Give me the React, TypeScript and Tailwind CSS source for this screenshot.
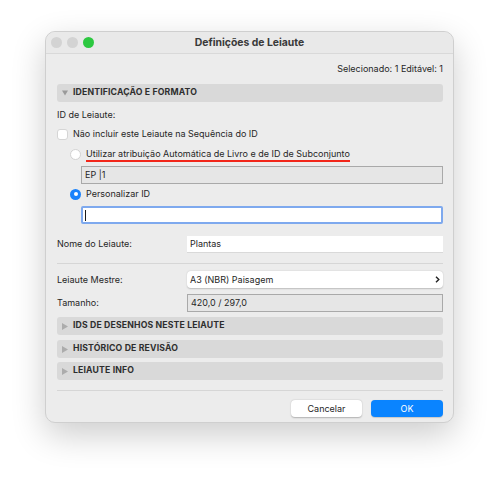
import React from 'react';

const font = { fontFamily: 'Inter, "Liberation Sans", sans-serif' };

const SectionBar: React.FC<{ title: string; open?: boolean; className?: string }> = ({ title, open, className }) => (
  <div className={`flex items-center h-[18px] rounded-[3px] bg-[#d9d9d9] pl-[5px] ${className || ''}`}>
    <span className="w-[6px] flex items-center justify-center">
      {open ? (
        <svg width="7" height="6" viewBox="0 0 7 6"><path d="M0 0h7L3.5 6z" fill="#9a9a9a" /></svg>
      ) : (
        <svg width="6" height="7" viewBox="0 0 6 7"><path d="M0 0v7l6-3.5z" fill="#acacac" /></svg>
      )}
    </span>
    <span className="ml-[5px] text-[8.7px] font-bold text-[#2e2e2e] tracking-[0.15px]">{title}</span>
  </div>
);

const Radio: React.FC<{ checked?: boolean }> = ({ checked }) =>
  checked ? (
    <span className="w-[11px] h-[11px] rounded-full bg-[#1a82fb] flex items-center justify-center">
      <span className="w-[4px] h-[4px] rounded-full bg-white" />
    </span>
  ) : (
    <span className="w-[11px] h-[11px] rounded-full bg-white border border-[#d2d2d2]" />
  );

export default function App() {
  return (
    <div className="w-[500px] h-[483px] bg-white overflow-hidden" style={font}>
      <div className="ml-[45px] mt-[31px] w-[409px] h-[392px] rounded-[10px] bg-[#ececec] border border-[#cfcfcf] shadow-[0_12px_34px_rgba(0,0,0,0.2)] flex flex-col text-[9px] text-[#262626]">
        {/* title bar */}
        <div className="relative h-[22px] flex items-center border-b border-[#d9d9d9] bg-[#e9e9e9] rounded-t-[10px]">
          <div className="flex gap-[5px] pl-[5px]">
            <span className="w-[11px] h-[11px] rounded-full bg-[#d3d3d3]" />
            <span className="w-[11px] h-[11px] rounded-full bg-[#d3d3d3]" />
            <span className="w-[11px] h-[11px] rounded-full bg-[#2cc840]" />
          </div>
          <div className="absolute inset-0 flex items-center justify-center text-[10.4px] font-bold text-[#3a3a3a]">
            Definições de Leiaute
          </div>
        </div>

        <div className="flex flex-col pl-[11px] pr-[10px]">
          <div className="mt-[8px] h-[14px] flex items-center justify-end">Selecionado: 1 Editável: 1</div>

          <SectionBar title="IDENTIFICAÇÃO E FORMATO" open className="mt-[8px]" />

          <div className="mt-[6px] h-[14px] flex items-center">ID de Leiaute:</div>

          <div className="mt-[5px] h-[14px] flex items-center">
            <span className="w-[11px] h-[11px] rounded-[3px] bg-white border border-[#d5d5d5]" />
            <span className="ml-[5px]">Não incluir este Leiaute na Sequência do ID</span>
          </div>

          <div className="mt-[6px] h-[14px] flex items-center pl-[13px]">
            <Radio />
            <span className="ml-[5px] border-b-2 border-[#f2261a] leading-[12px] pt-[1px]">
              Utilizar atribuição Automática de Livro e de ID de Subconjunto
            </span>
          </div>

          <div className="mt-[5px] ml-[24px] h-[18px] flex items-center bg-[#e6e6e6] border border-[#a9a9a9] pl-[3px]">
            EP |1
          </div>

          <div className="mt-[3px] h-[14px] flex items-center pl-[13px]">
            <Radio checked />
            <span className="ml-[5px]">Personalizar ID</span>
          </div>

          <div className="mt-[5px] ml-[24px] h-[18px] flex items-center bg-white border-2 border-[#7ea9ee] rounded-[2px] pl-[2px]">
            <span className="w-[1px] h-[11px] bg-[#1a1a1a]" />
          </div>

          <div className="mt-[12px] h-[16px] flex items-center">
            <span className="w-[130px]">Nome do Leiaute:</span>
            <div className="flex-1 h-full bg-white flex items-center pl-[3px] shadow-[0_1px_0_rgba(0,0,0,0.08)]">Plantas</div>
          </div>

          <div className="mt-[11px] h-px bg-[#d6d6d6]" />

          <div className="mt-[7px] h-[17px] flex items-center">
            <span className="w-[130px]">Leiaute Mestre:</span>
            <div className="flex-1 h-full bg-white rounded-[4px] flex items-center pl-[3px] pr-[3px] shadow-[0_0.5px_1.5px_rgba(0,0,0,0.2)]">
              <span className="flex-1">A3 (NBR) Paisagem</span>
              <svg width="5" height="7" viewBox="0 0 5 7"><path d="M1 0.8L3.8 3.5 1 6.2" stroke="#222" strokeWidth="1.4" fill="none" /></svg>
            </div>
          </div>

          <div className="mt-[6px] h-[18px] flex items-center">
            <span className="w-[130px]">Tamanho:</span>
            <div className="flex-1 h-full bg-[#e6e6e6] border border-[#a9a9a9] flex items-center pl-[3px]">420,0 / 297,0</div>
          </div>

          <SectionBar title="IDS DE DESENHOS NESTE LEIAUTE" className="mt-[5px] h-[17px]" />
          <SectionBar title="HISTÓRICO DE REVISÃO" className="mt-[5px] h-[17px]" />
          <SectionBar title="LEIAUTE INFO" className="mt-[4px] h-[17px]" />

          <div className="mt-[10px] h-px bg-[#d6d6d6]" />

          <div className="mt-[9px] h-[17px] flex justify-end gap-[9px]">
            <button className="w-[71px] h-full rounded-[4px] bg-white text-[9px] text-[#262626] shadow-[0_0.5px_1.5px_rgba(0,0,0,0.25)]">Cancelar</button>
            <button className="w-[72px] h-full rounded-[4px] bg-[#0a84ff] text-[9px] text-white shadow-[0_0.5px_1px_rgba(0,0,0,0.15)]">OK</button>
          </div>
        </div>
      </div>
    </div>
  );
}
